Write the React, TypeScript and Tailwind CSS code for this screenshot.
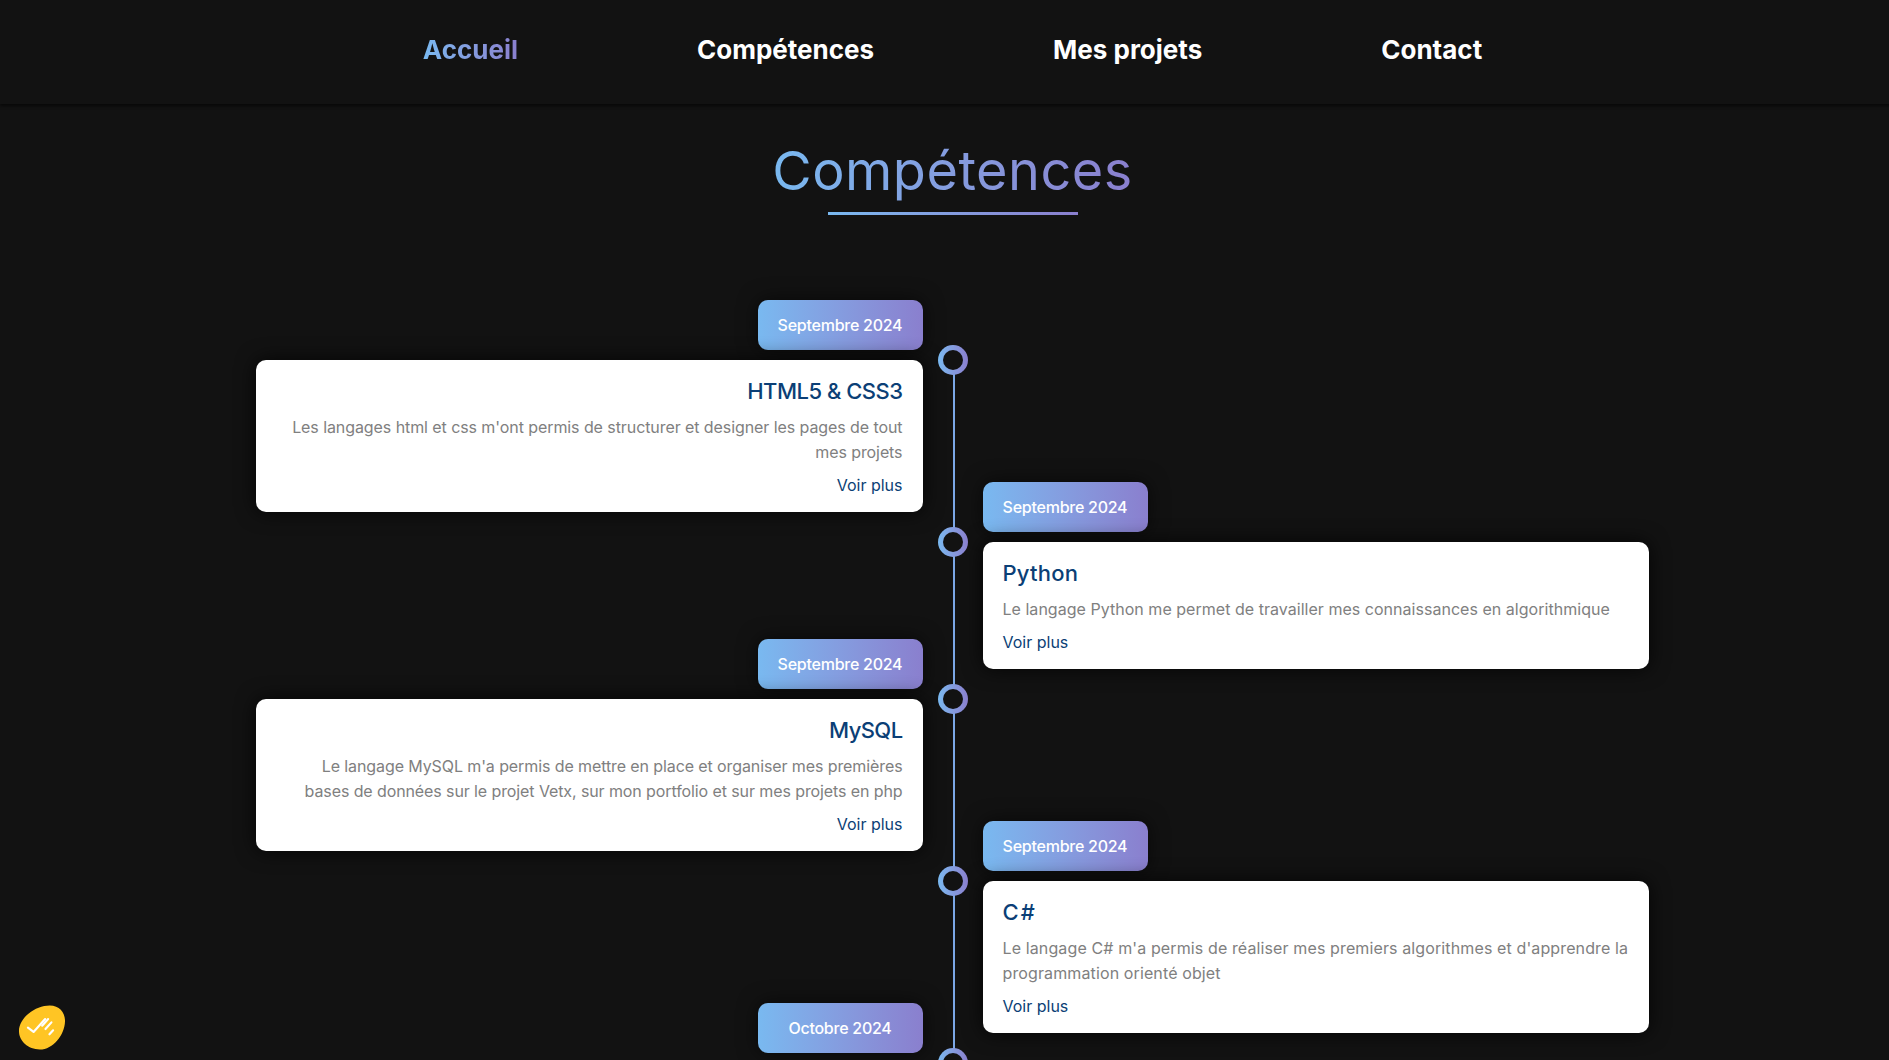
const grad = 'bg-linear-to-r from-[#79b9f0] to-[#8a7fce]';

// tracking per card: the font here is a little off Poppins' widths
const items = [
  {
    date: 'Septembre 2024',
    title: 'HTML5 & CSS3',
    text: "Les langages html et css m'ont permis de structurer et designer les pages de tout mes projets",
    track: 'tracking-[-0.08px]',
    titleTrack: 'tracking-[-0.5px]',
  },
  {
    date: 'Septembre 2024',
    title: 'Python',
    text: 'Le langage Python me permet de travailler mes connaissances en algorithmique',
    track: 'tracking-[0.03px]',
    titleTrack: 'tracking-[0.2px]',
  },
  {
    date: 'Septembre 2024',
    title: 'MySQL',
    text: "Le langage MySQL m'a permis de mettre en place et organiser mes premières bases de données sur le projet Vetx, sur mon portfolio et sur mes projets en php",
    track: 'tracking-[-0.1px]',
    titleTrack: 'tracking-[-0.6px]',
  },
  {
    date: 'Septembre 2024',
    title: 'C#',
    text: "Le langage C# m'a permis de réaliser mes premiers algorithmes et d'apprendre la programmation orienté objet",
    track: 'tracking-[0.12px]',
    titleTrack: 'tracking-[2px]',
  },
];

function Dot({ left }: { left: boolean }) {
  return (
    <div className={`absolute top-[45px] w-[30px] h-[30px] rounded-full p-[5px] ${grad} ${left ? 'right-[-45px]' : 'left-[-45px]'}`}>
      <div className="w-full h-full rounded-full bg-[#121212]" />
    </div>
  );
}

function Badge({ date, left }: { date: string; left: boolean }) {
  return (
    <div className={`w-[165px] h-[50px] rounded-[10px] flex items-center justify-center text-white text-[16px] font-medium tracking-[-0.25px] shadow-[0_0_20px_rgba(0,0,0,0.6)] ${grad} ${left ? 'ml-auto' : ''}`}>
      {date}
    </div>
  );
}

export default function App() {
  return (
    <div className="h-screen overflow-hidden bg-[#121212] font-[Inter,sans-serif]">
      <div className="w-[1905px]">
        <nav className="h-[104px] flex items-center justify-center gap-[179px] pb-[6px] shadow-[0_2px_3px_rgba(0,0,0,0.6)] text-[26px] font-bold text-white">
          <a className={`bg-clip-text text-transparent ${grad}`}>Accueil</a>
          <a>Compétences</a>
          <a>Mes projets</a>
          <a>Contact</a>
        </nav>

        <div className="flex flex-col items-center pt-[31px]">
          <h2 className={`text-[54px] leading-[72px] font-normal tracking-[0.5px] bg-clip-text text-transparent ${grad}`}>Compétences</h2>
          <div className={`w-[250px] h-[3px] mt-[5px] ${grad}`} />
        </div>

        <div className="relative mt-[85px] ml-[256px] w-[1393px] flex flex-col">
          <div className="absolute left-[697px] top-[60px] bottom-[-100px] w-[2px] bg-[#7ba7e6]" />
          {items.map((it, i) => {
            const left = i % 2 === 0;
            return (
              <div key={it.title} className={`relative w-[666.5px] ${left ? 'self-start' : 'self-end'} ${i > 0 ? 'mt-[-30px]' : ''}`}>
                <Badge date={it.date} left={left} />
                <Dot left={left} />
                <div className={`mt-[10px] bg-white rounded-[10px] px-5 py-[15px] shadow-[0_0_20px_rgba(0,0,0,0.8)] ${left ? 'text-right' : 'text-left'}`}>
                  <h3 className={`text-[22px] leading-[33px] font-medium text-[#0b3f76] ${it.titleTrack}`}>{it.title}</h3>
                  <p className={`mt-[7px] text-[16px] leading-[25px] text-[#808080] ${it.track}`}>{it.text}</p>
                  <a className="block mt-[8px] text-[16px] leading-[24px] text-[#0b3f76]">Voir plus</a>
                </div>
              </div>
            );
          })}
          <div className="relative w-[666.5px] self-start mt-[-30px]">
            <Badge date="Octobre 2024" left />
            <Dot left />
          </div>
        </div>
      </div>

      <svg className="fixed left-[19px] top-[1005px]" width="46" height="45" viewBox="57 137 139 133">
        <path d="M150 137C180 137 197 160 196 185C195 225 160 270 120 270C85 270 57 245 57 215C57 175 105 137 150 137Z" fill="#ffc524" />
        <g fill="none" stroke="#ffffff" strokeWidth="6.5" strokeLinecap="round" strokeLinejoin="round">
          <path d="M84 204L101 217L136 178" />
          <path d="M127 198L145 178" />
          <path d="M137 208L155 188" />
          <path d="M149 224L160 212" />
        </g>
      </svg>
    </div>
  );
}
